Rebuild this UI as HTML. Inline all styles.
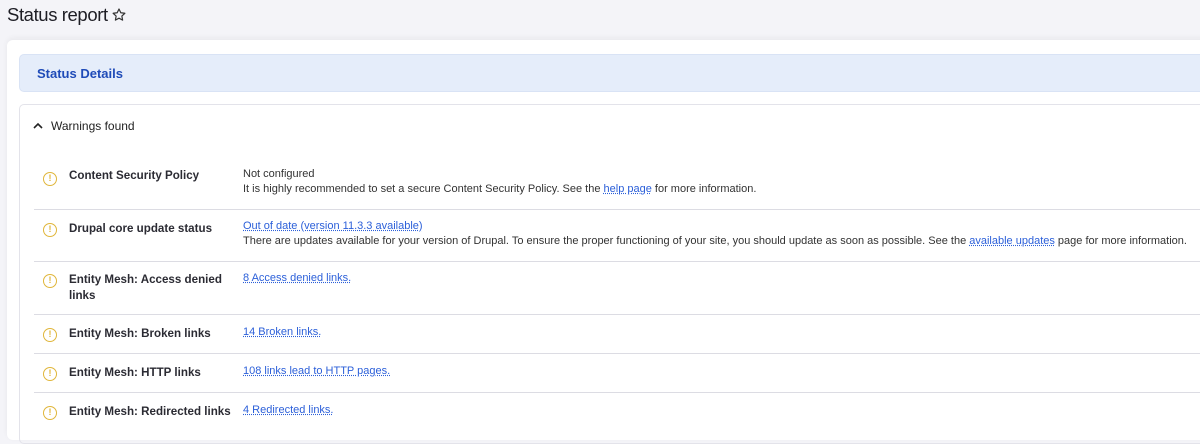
<!DOCTYPE html>
<html><head><meta charset="utf-8"><style>
*{box-sizing:border-box;margin:0;padding:0}
body{width:1200px;height:431px;overflow:hidden;background:#f4f4f8;font-family:"Liberation Sans",sans-serif;color:#222330;position:relative}
h1{position:absolute;left:7px;top:4px;font-size:18.5px;font-weight:normal;letter-spacing:-0.4px;color:#1d1d24}
.star{position:absolute;left:111px;top:7px}
.card{position:absolute;left:7px;top:40px;width:1210px;height:400px;background:#fff;border-radius:6px;box-shadow:0 -2px 6px rgba(0,0,0,.05)}
.sd{position:absolute;left:19px;top:54px;width:1200px;height:38px;background:#e5edfa;border-radius:5px;border:1px solid #d9e3f5}
.sd span{position:absolute;left:17px;top:11px;font-size:13px;font-weight:bold;color:#1f4bb8}
.wb{position:absolute;left:19px;top:104px;width:1200px;height:340px;border:1px solid #e3e3ea;border-radius:5px}
.wf{position:absolute;left:51px;top:119px;font-size:12px;color:#222}
.chev{position:absolute;left:33px;top:122px}
.row{position:absolute;left:34px;width:1170px;border-top:1px solid #dcdce3}
.ic{position:absolute;left:9px;width:14px;height:14px;border:1.5px solid #e0b63a;border-radius:50%;font-size:9px;font-weight:bold;color:#e0b63a;text-align:center;line-height:11px}
.t{position:absolute;left:35px;font-size:11.6px;font-weight:bold;color:#2b2b33;line-height:16px;width:170px}
.d{position:absolute;left:209px;font-size:11px;color:#333;line-height:15px}
a{color:#2b5fd9;text-decoration:underline dotted}
</style></head><body>
<h1>Status report</h1>
<svg class="star" width="16" height="16" viewBox="0 0 24 24"><path d="M12 3l2.7 5.6 6.1.8-4.5 4.2 1.1 6.1L12 16.8 6.6 19.7l1.1-6.1L3.2 9.4l6.1-.8z" fill="none" stroke="#333" stroke-width="1.8" stroke-linejoin="round"/></svg>
<div class="card"></div>
<div class="sd"><span>Status Details</span></div>
<div class="wb"></div>
<svg class="chev" width="10" height="8" viewBox="0 0 10 8"><path d="M1 6l4-4 4 4" fill="none" stroke="#222" stroke-width="1.6"/></svg>
<div class="wf">Warnings found</div>

<div class="row" style="top:150px;border-top:none"><div class="ic" style="top:22px">!</div><div class="t" style="top:18px">Content Security Policy</div><div class="d" style="top:17px">Not configured<br>It is highly recommended to set a secure Content Security Policy. See the <a>help page</a> for more information.</div></div>
<div class="row" style="top:209px"><div class="ic" style="top:13px">!</div><div class="t" style="top:11px">Drupal core update status</div><div class="d" style="top:9px"><a>Out of date (version 11.3.3 available)</a><br>There are updates available for your version of Drupal. To ensure the proper functioning of your site, you should update as soon as possible. See the <a>available updates</a> page for more information.</div></div>
<div class="row" style="top:261px"><div class="ic" style="top:12px">!</div><div class="t" style="top:10px">Entity Mesh: Access denied links</div><div class="d" style="top:9px"><a>8 Access denied links.</a></div></div>
<div class="row" style="top:314px"><div class="ic" style="top:13px">!</div><div class="t" style="top:11px">Entity Mesh: Broken links</div><div class="d" style="top:10px"><a>14 Broken links.</a></div></div>
<div class="row" style="top:353px"><div class="ic" style="top:13px">!</div><div class="t" style="top:11px">Entity Mesh: HTTP links</div><div class="d" style="top:10px"><a>108 links lead to HTTP pages.</a></div></div>
<div class="row" style="top:392px"><div class="ic" style="top:13px">!</div><div class="t" style="top:11px">Entity Mesh: Redirected links</div><div class="d" style="top:10px"><a>4 Redirected links.</a></div></div>
</body></html>
